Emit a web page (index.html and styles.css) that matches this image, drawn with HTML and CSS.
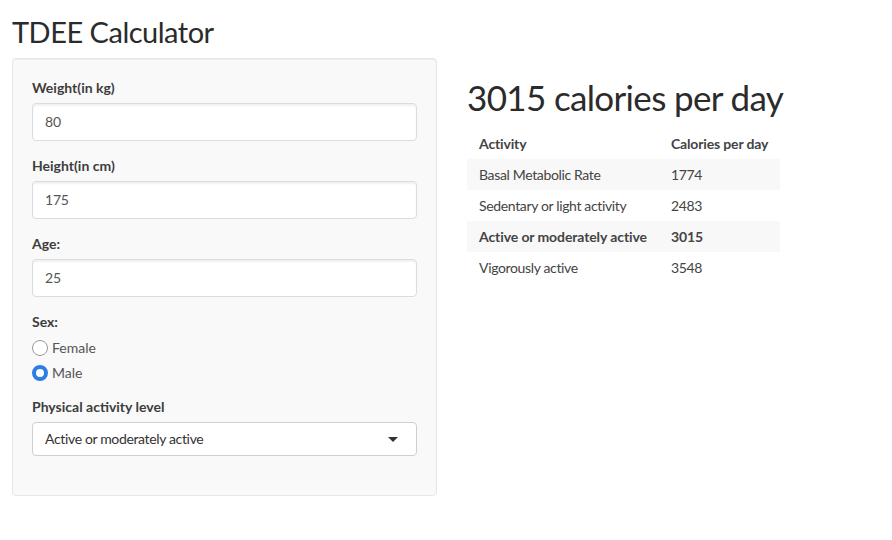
FILE: index.html
```html
<!DOCTYPE html>
<html>
<head>
<meta charset="utf-8">
<link rel="stylesheet" href="styles.css">
</head>
<body>
<div class="page">
  <h2 class="title">TDEE Calculator</h2>
  <div class="layout">
    <div class="sidebar">
      <div class="well">
        <div class="form-group">
          <label class="ctl-label">Weight(in kg)</label>
          <div class="form-control">80</div>
        </div>
        <div class="form-group">
          <label class="ctl-label">Height(in cm)</label>
          <div class="form-control">175</div>
        </div>
        <div class="form-group">
          <label class="ctl-label">Age:</label>
          <div class="form-control">25</div>
        </div>
        <div class="form-group radios">
          <label class="ctl-label">Sex:</label>
          <label class="radio"><span class="dot"></span><span>Female</span></label>
          <label class="radio"><span class="dot checked"></span><span>Male</span></label>
        </div>
        <div class="form-group last">
          <label class="ctl-label">Physical activity level</label>
          <div class="select">
            <span>Active or moderately active</span>
            <span class="caret"></span>
          </div>
        </div>
      </div>
    </div>
    <div class="main">
      <h1 class="result">3015 calories per day</h1>
      <table class="tbl">
        <thead>
          <tr><th>Activity</th><th>Calories per day</th></tr>
        </thead>
        <tbody>
          <tr class="odd"><td>Basal Metabolic Rate</td><td>1774</td></tr>
          <tr><td>Sedentary or light activity</td><td>2483</td></tr>
          <tr class="odd bold"><td>Active or moderately active</td><td>3015</td></tr>
          <tr><td>Vigorously active</td><td>3548</td></tr>
        </tbody>
      </table>
    </div>
  </div>
</div>
</body>
</html>
```

FILE: styles.css
```css
* { box-sizing: border-box; }
html, body { margin: 0; padding: 0; background: #fff; }
body {
  font-family: "Lato", "Liberation Sans", sans-serif;
  font-size: 14px;
  line-height: 20px;
  color: #333;
}
.page { padding: 0 12px; }
.title {
  margin: 0;
  padding-top: 15px;
  font-size: 29px;
  line-height: 33px;
  letter-spacing: -0.5px;
  font-weight: 400;
  color: #2b2b2b;
}
.layout {
  display: flex;
  margin-top: 10px;
}
.sidebar { width: 425px; flex: none; }
.well {
  background: #f9f9f9;
  border: 1px solid #e6e6e6;
  border-radius: 4px;
  box-shadow: inset 0 1px 1px rgba(0,0,0,.05);
  padding: 19px 19px 39px;
}
.form-group { margin-bottom: 15px; }
.form-group.last { margin-bottom: 0; }
.ctl-label {
  display: block;
  font-weight: 700;
  color: #3d3d3d;
  margin-bottom: 5px;
  line-height: 20px;
}
.form-control {
  height: 38px;
  border: 1px solid #dcdcdc;
  border-radius: 4px;
  background: #fff;
  box-shadow: inset 0 2px 2px rgba(0,0,0,.06);
  padding: 8px 12px;
  color: #555;
  line-height: 20px;
  letter-spacing: -0.2px;
}
.radios { margin-bottom: 12px; }
.radios .ctl-label { margin-bottom: 3px; }
.radio {
  display: flex;
  align-items: center;
  height: 25px;
  color: #555;
}
.dot {
  width: 16px;
  height: 16px;
  border-radius: 50%;
  border: 1px solid #9a9a9a;
  background: #fff;
  margin-right: 4px;
  flex: none;
}
.dot.checked {
  border: 4px solid #2f7de1;
}
.select {
  height: 34px;
  border: 1px solid #cfcfcf;
  border-radius: 4px;
  background: #fff;
  display: flex;
  align-items: center;
  justify-content: space-between;
  padding: 0 18px 0 12px;
  color: #333;
  letter-spacing: -0.35px;
}
.caret {
  width: 0; height: 0;
  border-left: 5px solid transparent;
  border-right: 5px solid transparent;
  border-top: 5px solid #333;
}
.main {
  padding-left: 30px;
  padding-top: 19px;
}
.result {
  margin: 0 0 11px;
  font-size: 35px;
  line-height: 40px;
  letter-spacing: -0.65px;
  font-weight: 400;
  color: #2b2b2b;
}
.tbl {
  border-collapse: collapse;
  color: #444;
}
.tbl th, .tbl td {
  text-align: left;
  padding: 5px 12px;
  line-height: 21px;
}
.tbl td { letter-spacing: -0.35px; }
.tbl th { font-weight: 700; letter-spacing: -0.15px; }
.tbl tr.odd { background: #f8f8f8; }
.tbl tr.bold td { font-weight: 700; letter-spacing: -0.1px; }
```
